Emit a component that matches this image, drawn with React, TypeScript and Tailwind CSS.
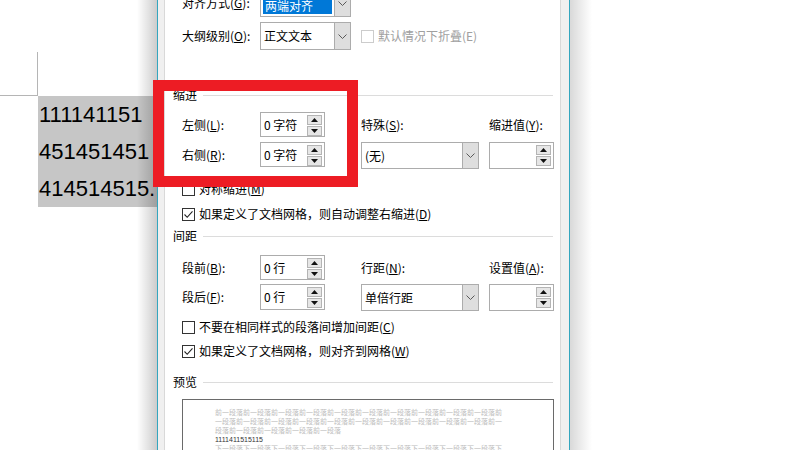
import React from 'react';

const cjk = "font-['Noto_Sans_CJK_SC','Liberation_Sans',sans-serif]";

// 下拉箭头
function Chevron() {
  return (
    <svg width="9" height="5" viewBox="0 0 9 5">
      <polyline points="0.5,0.5 4.5,4.5 8.5,0.5" fill="none" stroke="#5a5a5a" strokeWidth="1" />
    </svg>
  );
}

function SpinButtons() {
  return (
    <div className="absolute right-[2px] top-[2px] flex flex-col gap-px">
      <div className="flex h-[10px] w-[15px] items-center justify-center border border-[#b4b4b4] bg-[#e6e6e6]">
        <svg width="7" height="4" viewBox="0 0 7 4"><polygon points="3.5,0 7,4 0,4" fill="#111" /></svg>
      </div>
      <div className="flex h-[10px] w-[15px] items-center justify-center border border-[#b4b4b4] bg-[#e6e6e6]">
        <svg width="7" height="4" viewBox="0 0 7 4"><polygon points="0,0 7,0 3.5,4" fill="#111" /></svg>
      </div>
    </div>
  );
}

function Spin({ value, className }: { value: string; className: string }) {
  return (
    <div className={`relative flex items-center border border-[#acacac] bg-white pl-[3px] ${className}`}>
      <span className="leading-[14px]">{value}</span>
      <SpinButtons />
    </div>
  );
}

function Select({ children, className }: { children: React.ReactNode; className: string }) {
  return (
    <div className={`flex border border-[#acacac] bg-white ${className}`}>
      <div className="flex flex-1 items-center pl-[3px]">{children}</div>
      <div className="flex w-[16px] items-center justify-center border-l border-[#acacac] bg-[#dedede]">
        <Chevron />
      </div>
    </div>
  );
}

function CheckBox({ checked, disabled }: { checked?: boolean; disabled?: boolean }) {
  return (
    <div
      className={`flex h-[13px] w-[13px] items-center justify-center border bg-white ${
        disabled ? 'border-[#cccccc]' : 'border-[#333333]'
      }`}
    >
      {checked && (
        <svg width="11" height="11" viewBox="0 0 11 11">
          <polyline points="1.5,5.5 4.2,8.3 9.5,2.3" fill="none" stroke="#222" strokeWidth="1.1" />
        </svg>
      )}
    </div>
  );
}

function Section({ title, className }: { title: string; className: string }) {
  return (
    <div className={`flex h-[14px] items-center pl-[8px] pr-[7px] ${className}`}>
      <span className="leading-[14px]">{title}</span>
      <div className="ml-[6px] h-px flex-1 bg-[#dcdcdc]" />
    </div>
  );
}

export default function App() {
  return (
    <div className="relative h-[450px] w-[800px] overflow-hidden bg-white">
      {/* 文档区域 */}
      <div className="pt-[52px]">
        <div className="h-[44px] w-[38px] border-b border-r border-[#b5b5b5]" />
        <div className="ml-[38px] w-[160px] bg-[#c6c6c6] pl-px font-['Liberation_Sans',sans-serif] text-[22px] leading-[37px] text-black">
          <div>111141151</div>
          <div>451451451</div>
          <div>414514515.</div>
        </div>
      </div>

      {/* 对话框阴影 */}
      <div className="absolute left-[137px] top-0 h-[450px] w-[20px] bg-gradient-to-r from-transparent to-black/20" />
      <div className="absolute left-[570px] top-0 h-[450px] w-[22px] bg-gradient-to-r from-black/15 to-transparent" />

      {/* 段落对话框 */}
      <div
        className={`absolute left-[157px] top-[-12px] flex h-[480px] w-[413px] border-x border-[#33a6bf] bg-[#f0f0f0] pl-[6px] pr-[8px] ${cjk} text-[12px] text-black`}
      >
        <div className="flex h-full w-[397px] flex-col border-x border-t border-[#d9d9d9] bg-white">
          {/* 对齐方式 */}
          <div className="flex h-[28px] items-center pl-[17px]">
            <div className="w-[78px]">
              对齐方式(<span className="underline">G</span>):
            </div>
            <div className="flex h-[28px] w-[91px] border border-[#acacac] bg-white">
              <div className="flex-1 p-[2px]">
                <div className="flex h-full items-end bg-[#0078d7] pb-[1px] pl-[2px] leading-[14px] text-white">两端对齐</div>
              </div>
              <div className="flex w-[16px] items-center justify-center border-l border-[#acacac] bg-[#dedede]">
                <Chevron />
              </div>
            </div>
          </div>

          {/* 大纲级别 */}
          <div className="mt-[5px] flex h-[28px] items-center pl-[17px]">
            <div className="w-[78px]">
              大纲级别(<span className="underline">O</span>):
            </div>
            <Select className="h-[28px] w-[91px]">
              <span className="leading-[14px]">正文文本</span>
            </Select>
            <div className="ml-[10px] flex items-center gap-[4px] text-[#a0a0a0]">
              <CheckBox disabled />
              <span className="leading-[14px]">默认情况下折叠(E)</span>
            </div>
          </div>

          <Section title="缩进" className="mt-[38px]" />

          <div className="mt-[10px] flex h-[25px] items-center pl-[17px]">
            <div className="w-[78px]">
              左侧(<span className="underline">L</span>):
            </div>
            <Spin value="0 字符" className="h-[25px] w-[65px]" />
            <div className="ml-[36px] w-[128px]">
              特殊(<span className="underline">S</span>):
            </div>
            <div>
              缩进值(<span className="underline">Y</span>):
            </div>
          </div>

          <div className="mt-[5px] flex h-[27px] items-start pl-[17px]">
            <div className="flex h-[25px] w-[78px] items-center">
              右侧(<span className="underline">R</span>):
            </div>
            <Spin value="0 字符" className="h-[25px] w-[65px]" />
            <Select className="ml-[36px] h-[27px] w-[118px]">
              <span className="leading-[14px]">(无)</span>
            </Select>
            <Spin value="" className="ml-[10px] h-[27px] w-[65px]" />
          </div>

          <div className="mt-[13px] flex h-[15px] items-center gap-[4px] pl-[17px]">
            <CheckBox />
            <span className="leading-[14px]">
              对称缩进(<span className="underline">M</span>)
            </span>
          </div>
          <div className="mt-[11px] flex h-[15px] items-center gap-[4px] pl-[17px]">
            <CheckBox checked />
            <span className="leading-[14px]">
              如果定义了文档网格，则自动调整右缩进(<span className="underline">D</span>)
            </span>
          </div>

          <Section title="间距" className="mt-[8px]" />

          <div className="mt-[12px] flex h-[25px] items-center pl-[17px]">
            <div className="w-[78px]">
              段前(<span className="underline">B</span>):
            </div>
            <Spin value="0 行" className="h-[25px] w-[65px]" />
            <div className="ml-[36px] w-[128px]">
              行距(<span className="underline">N</span>):
            </div>
            <div>
              设置值(<span className="underline">A</span>):
            </div>
          </div>

          <div className="mt-[4px] flex h-[27px] items-start pl-[17px]">
            <div className="flex h-[26px] w-[78px] items-center">
              段后(<span className="underline">F</span>):
            </div>
            <Spin value="0 行" className="h-[26px] w-[65px]" />
            <Select className="ml-[36px] h-[27px] w-[118px]">
              <span className="leading-[14px]">单倍行距</span>
            </Select>
            <Spin value="" className="ml-[10px] h-[27px] w-[65px]" />
          </div>

          <div className="mt-[9px] flex h-[15px] items-center gap-[4px] pl-[17px]">
            <CheckBox />
            <span className="leading-[14px]">
              不要在相同样式的段落间增加间距(<span className="underline">C</span>)
            </span>
          </div>
          <div className="mt-[10px] flex h-[15px] items-center gap-[4px] pl-[17px]">
            <CheckBox checked />
            <span className="leading-[14px]">
              如果定义了文档网格，则对齐到网格(<span className="underline">W</span>)
            </span>
          </div>

          <Section title="预览" className="mt-[17px]" />

          {/* 预览框 */}
          <div className="ml-[17px] mt-[10px] h-[90px] w-[372px] border border-[#6a6a6a] bg-white pl-[32px] pt-[8px]">
            <div className="w-[287px] text-[7px] leading-[9px] text-[#bdbdbd]">{'前一段落'.repeat(25)}</div>
            <div className="font-['Liberation_Sans',sans-serif] text-[7px] leading-[9px] text-[#333]">1111411515115</div>
            <div className="w-[287px] text-[7px] leading-[9px] text-[#bdbdbd]">{'下一段落'.repeat(25)}</div>
          </div>
        </div>
      </div>

      {/* 红色标注框 */}
      <div className="absolute left-[153px] top-[80px] h-[107px] w-[205px] border-[11px] border-[#ed1c24]" />
    </div>
  );
}
